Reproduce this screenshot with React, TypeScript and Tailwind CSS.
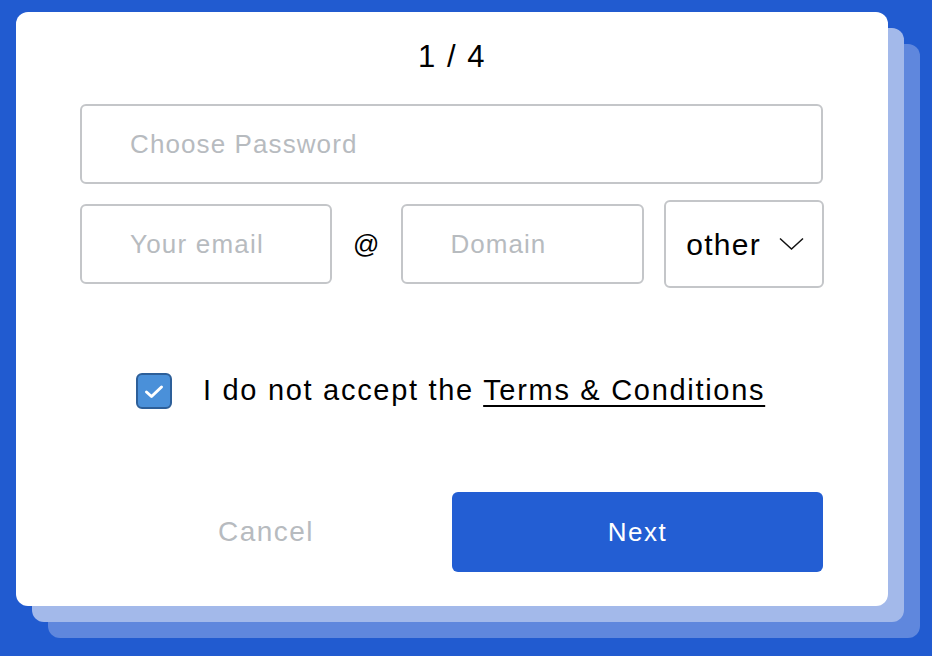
import React from "react";

export default function App() {
  return (
    <div
      className="relative w-[932px] h-[656px] overflow-hidden bg-[#215bd0]"
      style={{ fontFamily: '"Liberation Sans", Arial, sans-serif' }}
    >
      <div className="absolute left-[48px] top-[44px] w-[872px] h-[594px] rounded-[12px] bg-[#5f87dd]" />
      <div className="absolute left-[32px] top-[28px] w-[872px] h-[594px] rounded-[12px] bg-[#a3b9ea]" />
      <div className="absolute left-[16px] top-[12px] w-[872px] h-[594px] rounded-[12px] bg-white flex flex-col px-[64px] pt-[25px]">
        <div className="h-[40px] leading-[40px] text-center text-[31px] text-black tracking-[1.5px]">
          1 / 4
        </div>
        <div className="mt-[27px] h-[80px] w-[743px] rounded-[6px] border-2 border-[#c4c6c9] flex items-center pl-[48px] text-[26px] tracking-[1.1px] text-[#b7bbbf]">
          Choose Password
        </div>
        <div className="mt-[16px] h-[88px] flex items-center">
          <div className="h-[80px] w-[252px] rounded-[6px] border-2 border-[#c4c6c9] flex items-center pl-[48px] text-[26px] tracking-[1.2px] text-[#b7bbbf]">
            Your email
          </div>
          <div className="w-[69px] text-center text-[26px] text-black">@</div>
          <div className="h-[80px] w-[244px] rounded-[6px] border-2 border-[#c4c6c9] flex items-center pl-[48px] text-[26px] tracking-[1px] text-[#b7bbbf]">
            Domain
          </div>
          <div className="ml-[20px] h-[88px] w-[160px] rounded-[6px] border-2 border-[#c4c6c9] flex items-center justify-between pl-[20px] pr-[18px] text-[30px] tracking-[1.3px] text-black">
            <span>other</span>
            <svg width="25" height="14" viewBox="0 0 25 14" fill="none">
              <path d="M1 1.5 L12.5 12 L24 1.5" stroke="#111" strokeWidth="1.5" />
            </svg>
          </div>
        </div>
        <div className="mt-[83px] h-[40px] flex items-center pl-[56px]">
          <div className="w-[36px] h-[36px] shrink-0 rounded-[6px] bg-[#4a90d9] border-2 border-[#2d5f99] flex items-center justify-center">
            <svg className="w-[20px] h-[15px]" viewBox="0 0 20 15" fill="none">
              <path d="M2.5 8 L7.5 12.5 L17.5 3" stroke="white" strokeWidth="3" strokeLinecap="round" strokeLinejoin="round" />
            </svg>
          </div>
          <div className="ml-[31px] text-[29px] tracking-[1.7px] text-black">
            I do not accept the{" "}
            <span className="underline decoration-2 underline-offset-[5px]">Terms &amp; Conditions</span>
          </div>
        </div>
        <div className="mt-[81px] flex">
          <button className="w-[372px] h-[80px] text-[28px] tracking-[1.5px] text-[#b7bbbf]">Cancel</button>
          <button className="w-[371px] h-[80px] rounded-[6px] bg-[#235ed3] text-white text-[26px] tracking-[1.5px]">
            Next
          </button>
        </div>
      </div>
    </div>
  );
}
